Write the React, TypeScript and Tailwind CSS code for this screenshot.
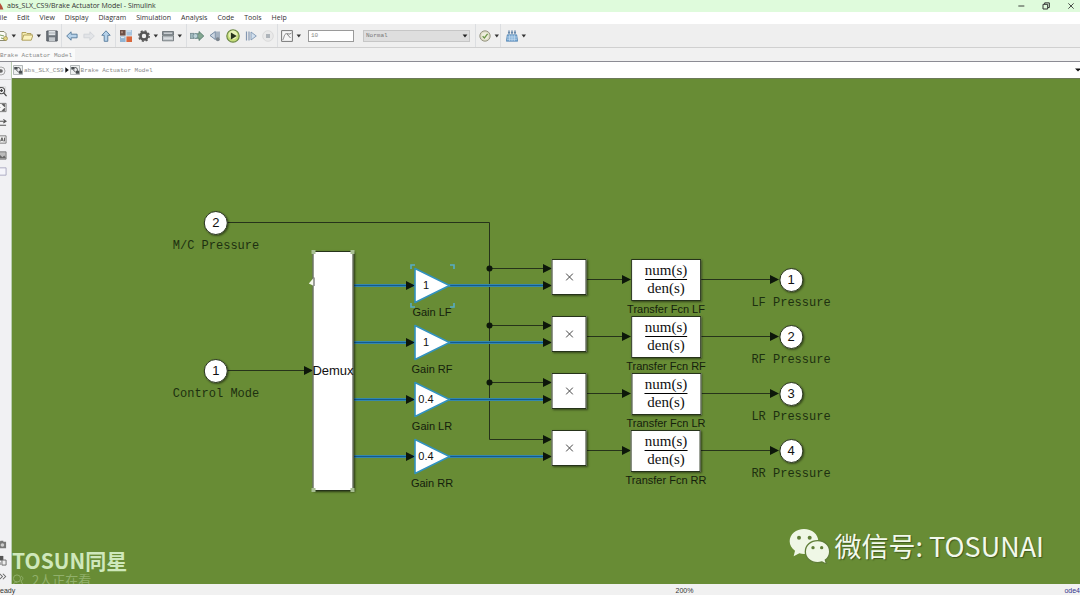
import type { CSSProperties, ReactNode } from "react";

const menus = ["File", "Edit", "View", "Display", "Diagram", "Simulation", "Analysis", "Code", "Tools", "Help"];

const channels = [
  { id: "LF", gain: "1", port: 1 },
  { id: "RF", gain: "1", port: 2 },
  { id: "LR", gain: "0.4", port: 3 },
  { id: "RR", gain: "0.4", port: 4 },
];

const ROW_HEIGHT = 57;

function Icon({ children, className = "size-3" }: { children: ReactNode; className?: string }) {
  return (
    <svg viewBox="0 0 12 12" className={`${className} shrink-0`} fill="none" aria-hidden="true">
      {children}
    </svg>
  );
}

function Tool({ label, children, className }: { label: string; children: ReactNode; className?: string }) {
  return (
    <button type="button" aria-label={label} className="shrink-0">
      <Icon className={className}>{children}</Icon>
    </button>
  );
}

function Caret({ label }: { label: string }) {
  return (
    <button type="button" aria-label={label} className="ml-[3px] shrink-0">
      <svg viewBox="0 0 6 4" className="h-1 w-1.5" aria-hidden="true">
        <path d="M.6 0.5h4.4L2.8 3.4z" fill="#333" />
      </svg>
    </button>
  );
}

function Separator() {
  return <div className="mx-[3px] h-full w-px shrink-0 bg-[#dcdee1]" />;
}

function Toolbar() {
  return (
    <div className="flex h-6 items-center overflow-hidden border-b border-[#d0d0d0] bg-[#efefef]">
      <div className="-ml-1 flex items-center">
        <Tool label="New model">
          <path d="M2 1.5h6l2 2v7H2z" fill="#fbfbf4" stroke="#8b8b72" />
          <path d="M4 5l4 1M5 8l4 1" stroke="#7b9b62" />
          <circle cx="9.5" cy="8.5" r="2" fill="#e1d482" stroke="#94843e" strokeWidth=".6" />
        </Tool>
        <Caret label="New options" />
      </div>
      <div className="ml-1 flex items-center">
        <Tool label="Open">
          <path d="M1 10V2.500h4l1 1h4V5" fill="#f5edb0" stroke="#aa9a55" strokeWidth=".9" />
          <path d="M1 10.2L2.8 5H12l-1.8 5.2z" fill="#fbf3bd" stroke="#aa9a55" strokeWidth=".9" />
        </Tool>
        <Caret label="Open options" />
      </div>
      <div className="ml-1 flex items-center">
        <Tool label="Save">
          <path d="M.8 1h10.4v10H.8z" fill="#70777e" stroke="#535960" />
          <path d="M2.7 1h6.6v4.2H2.7z" fill="#dfe3e6" />
          <path d="M3 7.3h6V11H3z" fill="#c3c8cc" />
          <path d="M3 3h6" stroke="#949a9f" strokeWidth=".7" />
        </Tool>
      </div>
      <Separator />
      <div className="ml-px flex items-center gap-[5px]">
        <Tool label="Back">
          <path d="M.7 6l4.400-4.200v2.400h6v3.600h-6v2.400z" fill="#b6d2ea" stroke="#55799b" strokeWidth=".9" />
        </Tool>
        <Tool label="Forward">
          <path d="M11.3 6L6.9 1.8v2.400h-6v3.600h6v2.400z" fill="#e2e4e7" stroke="#d0d4d8" strokeWidth=".9" />
        </Tool>
        <Tool label="Up to parent">
          <path d="M6 .8L1.8 5.3h2.400v6h3.600v-6h2.400z" fill="#b6d2ea" stroke="#55799b" strokeWidth=".9" />
        </Tool>
      </div>
      <Separator />
      <div className="ml-px flex items-center">
        <Tool label="Library browser">
          <path d="M0 0h5.6v5.6H0z" fill="#6d5149" />
          <path d="M6.4 0H12v5.6H6.4z" fill="#a8c4dd" />
          <path d="M0 6.4h5.6V12H0z" fill="#92b5d3" />
          <path d="M6.4 6.4H12V12H6.4z" fill="#d8673d" />
          <path d="M1 1.2h2v2H1z" fill="#a5877b" />
          <path d="M7 1h4M1 7.6h3.4" stroke="#e9f1f7" />
        </Tool>
      </div>
      <div className="ml-1.5 flex items-center">
        <Tool label="Model configuration">
          <circle cx="6" cy="6" r="3.5" stroke="#555" strokeWidth="2.6" />
          <circle cx="6" cy="6" r="5.2" stroke="#555" strokeWidth="1.4" strokeDasharray="2.1 1.98" />
          <circle cx="6" cy="6" r="1.8" fill="#efefef" />
        </Tool>
        <Caret label="Configuration options" />
      </div>
      <div className="ml-[3px] flex items-center">
        <Tool label="Model explorer">
          <path d="M.5 1.500h11v3.600H.5z" fill="#8e959b" stroke="#62696f" strokeWidth=".8" />
          <path d="M.5 5.8h11v5H.5z" fill="#c3c8cc" stroke="#62696f" strokeWidth=".8" />
          <path d="M2 3.2h8M2 8.2h8" stroke="#e4e7e9" strokeWidth="1" />
        </Tool>
        <Caret label="Explorer options" />
      </div>
      <Separator />
      <div className="flex items-center gap-[5px]">
        <Tool label="Update diagram" className="h-3 w-3.5">
          <path d="M-1 3.400h4v5h-4z" fill="#a1b9bd" stroke="#60797e" strokeWidth=".7" />
          <path d="M4 3.8h4V1.500L12.8 6 8 10.500V8.200H4z" fill="#83a690" stroke="#4f7568" strokeWidth=".8" />
          <circle cx="4.400" cy="6" r="2.4" fill="#bdd2d7" stroke="#5d7b84" strokeWidth=".6" />
        </Tool>
        <Tool label="Step back">
          <path d="M6.300 1.500L1 5.500l5.300 4z" fill="#cdd7e2" stroke="#69809b" strokeWidth=".9" />
          <path d="M8 1.500v7M10 1.500v7" stroke="#69809b" strokeWidth="1.1" />
          <circle cx="8.800" cy="9.200" r="2" fill="#7c858e" />
        </Tool>
        <Tool label="Run" className="size-3.5">
          <circle cx="6" cy="6" r="5.3" fill="#c5dd79" stroke="#6d8846" strokeWidth="1" />
          <circle cx="6" cy="5" r="3.7" fill="#e7f3b8" />
          <path d="M4.200 3v6l5-3z" fill="#26331b" />
        </Tool>
        <Tool label="Step forward">
          <path d="M1.500 1.500v9M4 1.500v9" stroke="#8397b1" strokeWidth="1.2" />
          <path d="M6 2l5.300 4L6 10z" fill="#d2e0ee" stroke="#7f97b3" strokeWidth=".9" />
        </Tool>
        <Tool label="Stop">
          <circle cx="6" cy="6" r="5.3" fill="#e9e9e9" stroke="#d5d5d5" strokeWidth=".8" />
          <path d="M4 4h4v4H4z" fill="#aeb4ba" />
        </Tool>
      </div>
      <Separator />
      <div className="flex items-center">
        <Tool label="Simulation data inspector">
          <path d="M.6.6h10.800v10.800H.6z" fill="#f6f6f6" stroke="#777" />
          <path d="M1.500 10C3 9 3 3.600 5.500 3.600S8 5 10.500 3M6 4l3.500 4" stroke="#777" strokeWidth=".9" />
        </Tool>
        <Caret label="Inspector options" />
      </div>
      <input
        aria-label="Stop time"
        defaultValue="10"
        className="ml-1.5 h-3 w-[46px] border border-[#9a9a9a] bg-white px-0.5 font-['Liberation_Mono',monospace] text-[6px] text-[#888]"
      />
      <div className="relative ml-[9px]">
        <select
          aria-label="Simulation mode"
          className="block h-3 w-[107px] appearance-none border border-[#c6c6c6] bg-[#dedede] px-0.5 font-['Liberation_Mono',monospace] text-[6px] text-[#777]"
        >
          <option>Normal</option>
          <option>Accelerator</option>
        </select>
        <svg viewBox="0 0 6 4" className="pointer-events-none absolute top-1 right-0.5 h-1 w-1.5" aria-hidden="true">
          <path d="M.6.5h4.800L3 3.400z" fill="#222" />
        </svg>
      </div>
      <div className="ml-0.5 h-full">
        <Separator />
      </div>
      <div className="flex items-center">
        <Tool label="Model advisor">
          <circle cx="6" cy="6" r="5.2" fill="#dddcc5" stroke="#8d8c78" strokeWidth=".9" />
          <circle cx="6" cy="6" r="3.4" fill="#efeedd" />
          <path d="M3.600 6.200l1.800 1.800 3.200-4.200" stroke="#6d9648" strokeWidth="1.3" />
        </Tool>
        <Caret label="Advisor options" />
      </div>
      <div className="h-full w-px bg-[#dcdee1]" />
      <div className="ml-[5px] flex items-center">
        <Tool label="Build">
          <path d="M3 .4v3M6 .4v3M9 .4v3" stroke="#3a6592" strokeWidth="1" />
          <path d="M1.800 2.400L3 4l1.200-1.600zM4.800 2.400L6 4l1.200-1.600zM7.800 2.400L9 4l1.200-1.600z" fill="#3a6592" />
          <path d="M1.300 4.800h9.400l1 6.400H.3z" fill="#77a9d5" stroke="#4d80ae" strokeWidth=".7" />
          <path d="M1 7h10M1 9.200h10M3.700 5v6M6 5v6M8.300 5v6" stroke="#dcebf6" strokeWidth=".6" />
        </Tool>
        <Caret label="Build options" />
      </div>
    </div>
  );
}

function ModelIcon() {
  return (
    <Icon className="size-2.5">
      <path d="M.6.6h10.800v10.800H.6z" fill="#eef0f0" stroke="#a5abac" />
      <path d="M1.500 2.500h4v3h-4zM7 7h4v3.500H7z" fill="#4a4f52" />
      <path d="M5.400 3.200C8 2.500 9 4 9 7M3.500 5.400L7 9" stroke="#4a4f52" strokeWidth="1.1" />
    </Icon>
  );
}

function Rail() {
  return (
    <div className="flex w-3 shrink-0 flex-col justify-between overflow-hidden border-r border-[#b9ccb0] bg-[#f1f1f3]">
      <div>
        <div className="flex h-[18px] items-center border-b border-[#d5d5d5]">
          <Tool label="Hide browser" className="-ml-1 size-2.5">
            <circle cx="6" cy="6" r="4.8" stroke="#999" />
            <circle cx="6" cy="6" r="2.2" fill="#666" />
          </Tool>
        </div>
        <div className="-ml-1 mt-1.5 flex flex-col gap-[5px]">
          <Tool label="Zoom" className="size-[11px]">
            <path d="M0 .8h10.500M10.500 1v9" stroke="#c9c9c9" strokeWidth=".6" />
            <circle cx="6" cy="5" r="3.4" stroke="#555" strokeWidth="1.2" />
            <path d="M8.400 7.600L11.500 11M6 3.400v3.200M4.400 5h3.200" stroke="#444" strokeWidth="1.3" />
          </Tool>
          <Tool label="Fit to view" className="size-[11px]">
            <path d="M1 1.500h10v9H1z" fill="#f6f6f6" stroke="#777" />
            <path d="M9.500 2.500v3l-3-3zM9.500 9.500v-3l-3 3zM3 6h2" fill="#444" stroke="#444" strokeWidth=".5" />
          </Tool>
          <Tool label="Signal routing" className="size-[11px]">
            <path d="M1 3.500h10M1 8h10M8 1.500l3 2-3 2" stroke="#555" strokeWidth="1.1" />
          </Tool>
          <Tool label="Annotation" className="size-[11px]">
            <path d="M0 2h11v8H0z" fill="#eee" stroke="#777" />
            <path d="M5 8l1.500-4L8 8M5.400 6.800h2M9.300 4v4" stroke="#444" strokeWidth=".9" />
          </Tool>
          <Tool label="Image" className="size-[11px]">
            <path d="M0 2h11v8H0z" fill="#bbb" stroke="#777" />
            <path d="M0 9l4-4 3 3 2-2 2 3z" fill="#666" />
          </Tool>
          <Tool label="Area" className="size-[11px]">
            <path d="M0 2h11v8H0z" fill="#f5f5fa" stroke="#a9a6c0" />
          </Tool>
        </div>
      </div>
      <div className="-ml-1 mb-0.5 flex flex-col gap-[5px]">
        <Tool label="Snapshot" className="size-[11px]">
          <path d="M0 3h4l1-1h3v1h3v7H0z" fill="#777" />
          <circle cx="7" cy="6.500" r="2" fill="#ccc" />
        </Tool>
        <Tool label="Compare" className="size-[11px]">
          <path d="M1 1h7v5H1z" fill="#555" />
          <path d="M6.500 5.500h4.500v5.500H6.500z" fill="#eee" stroke="#666" />
          <path d="M2 8h3v3H2z" fill="#777" />
        </Tool>
        <Tool label="Expand" className="size-[11px]">
          <path d="M4 3l3 3-3 3M7.500 3l3 3-3 3" stroke="#666" strokeWidth="1.1" />
        </Tool>
      </div>
    </div>
  );
}

function Arrow({ x, y }: { x: number; y: number }) {
  return <path d={`M${x} ${y}l-9 -4.5v9z`} fill="#0d170a" />;
}

function Wires() {
  return (
    <svg className="absolute inset-0 size-full" fill="none" aria-hidden="true">
      <g stroke="#26331a" strokeWidth="1">
        <path d="M215 143.500h262.500V360.500H535" />
        <path d="M215 291.500h80" />
      </g>
      <Arrow x={301} y={291.5} />
      {channels.map((channel, i) => {
        const y = i * ROW_HEIGHT;
        return (
          <g key={channel.id}>
            <path d={`M342 ${y + 206.5}h60M437 ${y + 206.5}h94`} stroke="#3387ad" strokeWidth="3" />
            <path d={`M342 ${y + 206.5}h60M437 ${y + 206.5}h94`} stroke="#125a8e" strokeWidth="1" />
            {i < 3 && <path d={`M477.5 ${y + 189.5}H535`} stroke="#26331a" />}
            <path d={`M575 ${y + 200.5}h38M689 ${y + 200.5}h70`} stroke="#26331a" />
            {i < 3 && <circle cx="477.5" cy={y + 189.5} r="3" fill="#0d170a" />}
            <Arrow x={403} y={y + 206.5} />
            <Arrow x={540} y={y + 189.5} />
            <Arrow x={540} y={y + 206.5} />
            <Arrow x={619} y={y + 200.5} />
            <Arrow x={767} y={y + 200.5} />
            <path
              d={`M403 ${y + 189.5}l34.5 17l-34.5 17z`}
              fill="#fff"
              stroke="#3292be"
              strokeWidth="1.6"
              strokeLinejoin="round"
            />
          </g>
        );
      })}
      <path
        d="M399 190v-4h4M438 186h4v4M399 224v4h4M438 228h4v-4"
        stroke="#55acc7"
        strokeWidth="1.6"
      />
    </svg>
  );
}

// Blocks are anchored at their top centre on the canvas.
function Node({ x, y, children }: { x: number; y: number; children: ReactNode }) {
  const position: CSSProperties = { left: x, top: y };
  return (
    <div className="absolute flex -translate-x-1/2 flex-col items-center whitespace-nowrap" style={position}>
      {children}
    </div>
  );
}

function Port({ x, y, value, label }: { x: number; y: number; value: number; label: string }) {
  return (
    <Node x={x} y={y}>
      <div className="flex size-6 items-center justify-center rounded-full border border-[#26331a] bg-white text-[13px] shadow-[1px_1px_2px_rgba(0,0,0,0.45)]">
        {value}
      </div>
      <div className="mt-[3px] font-['Liberation_Mono',monospace] text-xs leading-4 text-[#1d3010]">{label}</div>
    </Node>
  );
}

function Diagram() {
  return (
    <>
      <Wires />
      <Port x={204} y={132} value={2} label="M/C Pressure" />
      <Port x={204} y={280} value={1} label="Control Mode" />

      <Node x={321} y={172}>
        <div className="relative flex h-60 w-[41px] items-center justify-center border border-[#26331a] bg-white text-[13px] shadow-[1px_1px_2px_rgba(0,0,0,0.6)]">
          Demux
          <span className="absolute -top-0.5 -left-0.5 size-1 bg-[#a8bf93]" />
          <span className="absolute -top-0.5 -right-0.5 size-1 bg-[#a8bf93]" />
          <span className="absolute -bottom-0.5 -left-0.5 size-1 bg-[#a8bf93]" />
          <span className="absolute -right-0.5 -bottom-0.5 size-1 bg-[#a8bf93]" />
        </div>
      </Node>
      <svg viewBox="0 0 7 10" className="absolute top-[198px] left-[296px] h-2.5 w-[7px]" aria-hidden="true">
        <path d="M6 .5v8.500L.8 6.500z" fill="#f3f7ea" />
        <path d="M6 .5v8.500" stroke="#333" strokeWidth=".9" />
      </svg>

      {channels.map((channel, i) => {
        const y = i * ROW_HEIGHT;
        return (
          <div key={channel.id}>
            <Node x={414} y={y + 198}>
              <div className="text-[11px] leading-4">{channel.gain}</div>
            </Node>
            <Node x={420} y={y + 225}>
              <div className="text-[11px] leading-4 text-[#14200c]">Gain {channel.id}</div>
            </Node>
            <Node x={557} y={y + 180}>
              <div className="flex h-9 w-[35px] items-center justify-center border border-[#26331a] bg-white shadow-[1px_1px_2px_rgba(0,0,0,0.5)]">
                <svg viewBox="0 0 8 8" className="size-2" role="img" aria-label="Product">
                  <path d="M.5.5l7 7M7.500.5l-7 7" stroke="#444" strokeWidth="1" />
                </svg>
              </div>
            </Node>
            <Node x={654} y={y + 180}>
              <div className="flex h-[42px] w-[70px] flex-col items-center justify-center border border-[#26331a] bg-white pb-0.5 font-['Liberation_Serif',serif] text-[15px] leading-4 shadow-[1px_1px_2px_rgba(0,0,0,0.5)]">
                <div className="border-b border-black pb-px">num(s)</div>
                <div>den(s)</div>
              </div>
              <div className="text-[11px] leading-4 text-[#14200c]">Transfer Fcn {channel.id}</div>
            </Node>
            <Port x={779} y={y + 189} value={channel.port} label={`${channel.id} Pressure`} />
          </div>
        );
      })}
    </>
  );
}

function WeChatLogo() {
  return (
    <svg viewBox="36 52 126 108" className="h-9 w-[42px]" aria-hidden="true">
      <path d="M81 55c-24 0-43 16-43 37 0 12 6 21 16 28l-4 17 17-9c5 1 9 2 14 2 24 0 43-17 43-38S105 55 81 55z" fill="#eff7e6" />
      <circle cx="66" cy="81" r="6" fill="#5f7d38" />
      <circle cx="98" cy="81" r="6" fill="#5f7d38" />
      <path
        d="M122 90c-21 0-37 14-37 33s16 33 37 33c5 0 9-1 13-2l14 7-4-13c8-6 13-15 13-25 0-19-15-33-36-33z"
        fill="#eff7e6"
        stroke="#5f7d38"
        strokeWidth="4"
      />
      <circle cx="108" cy="111" r="5" fill="#5f7d38" />
      <circle cx="134" cy="111" r="5" fill="#5f7d38" />
    </svg>
  );
}

export default function App() {
  return (
    <div className="flex h-screen flex-col overflow-hidden bg-[#f1f1f1] font-['Liberation_Sans',sans-serif] text-[#111]">
      <header className="flex h-3 shrink-0 items-center justify-between bg-[#dffbdc] font-['Open_Sans',sans-serif] text-[7px] text-[#333]">
        <div className="flex items-center gap-[3px]">
          <svg viewBox="0 0 4 8" className="h-2 w-1" aria-hidden="true">
            <path d="M0 1l2 3 1.400 3.400H0z" fill="#b4513a" />
          </svg>
          <h1>abs_SLX_CS9/Brake Actuator Model - Simulink</h1>
        </div>
        <div className="mr-[5px] flex items-center gap-[17px]">
          <Tool label="Minimize" className="size-2">
            <path d="M2 6h9" stroke="#333" strokeWidth="1.4" />
          </Tool>
          <Tool label="Restore" className="size-2">
            <path d="M1.500 3.500h7v7h-7zM4 3V1.300h7v7H9" stroke="#333" strokeWidth="1.5" />
          </Tool>
          <Tool label="Close" className="size-2">
            <path d="M2 2l8 8M10 2l-8 8" stroke="#333" strokeWidth="1.3" />
          </Tool>
        </div>
      </header>

      <nav className="-ml-1 flex h-3 shrink-0 items-center gap-2.5 bg-white font-['Open_Sans',sans-serif] text-[7px] text-[#333]">
        {menus.map((menu) => (
          <button key={menu} type="button">
            {menu}
          </button>
        ))}
      </nav>

      <Toolbar />

      <div className="flex h-3.5 shrink-0 items-end border-b border-[#8c8c94]">
        <div className="flex h-3 w-[75px] items-center bg-[#fafafa] font-['Liberation_Mono',monospace] text-[6px] text-[#888]">
          Brake Actuator Model
        </div>
      </div>

      <div className="flex min-h-0 flex-1">
        <Rail />
        <main className="flex min-w-0 flex-1 flex-col">
          <div className="flex h-[17px] shrink-0 items-center gap-px border-b border-[#6c7a58] bg-white pl-px font-['Liberation_Mono',monospace] text-[6px] text-[#888]">
            <ModelIcon />
            <a href="#root">abs_SLX_CS9</a>
            <svg viewBox="0 0 4 6" className="h-1.5 w-1" aria-hidden="true">
              <path d="M.3.3v5.400L3.800 3z" fill="#111" />
            </svg>
            <ModelIcon />
            <a href="#model">Brake Actuator Model</a>
            <button type="button" aria-label="Path history" className="ml-auto">
              <svg viewBox="0 0 6 4" className="h-1 w-1.5" aria-hidden="true">
                <path d="M1 .5h5v1L4 3.500z" fill="#111" />
              </svg>
            </button>
          </div>

          <div className="relative flex-1 overflow-hidden bg-[#688c35]">
            <Diagram />
            <div className="absolute bottom-0 left-0 font-['Noto_Sans_CJK_SC',sans-serif] text-[#cfe8bb]">
              <div className="text-[21px] leading-6 font-bold">TOSUN同星</div>
              <div className="flex h-3 items-start gap-2 overflow-hidden text-[13px] leading-4 text-[#91b06b]">
                <svg viewBox="0 0 12 12" className="mt-0.5 size-3" fill="none" stroke="currentColor" aria-hidden="true">
                  <circle cx="5" cy="4.500" r="3.6" />
                  <path d="M1 12c0-3 2-4 4-4M9 2c2.500 1 2.500 4 0 5l2 4" />
                </svg>
                2人正在看
              </div>
            </div>
            <div className="absolute right-9 bottom-[18px] flex items-center gap-1 font-['Noto_Sans_CJK_SC',sans-serif] text-[27px] text-[#f3f9ec] [text-shadow:1px_1px_1px_#3f5a1f]">
              <WeChatLogo />
              <span>微信号: TOSUNAI</span>
            </div>
          </div>
        </main>
      </div>

      <footer className="flex h-[11px] shrink-0 items-end bg-[#f1f1f1] text-[7px] leading-[9px] text-[#333]">
        <div className="-ml-[5px] flex-7">Ready</div>
        <div className="flex-4">200%</div>
        <div className="text-[#34348c]">ode4</div>
      </footer>
    </div>
  );
}
